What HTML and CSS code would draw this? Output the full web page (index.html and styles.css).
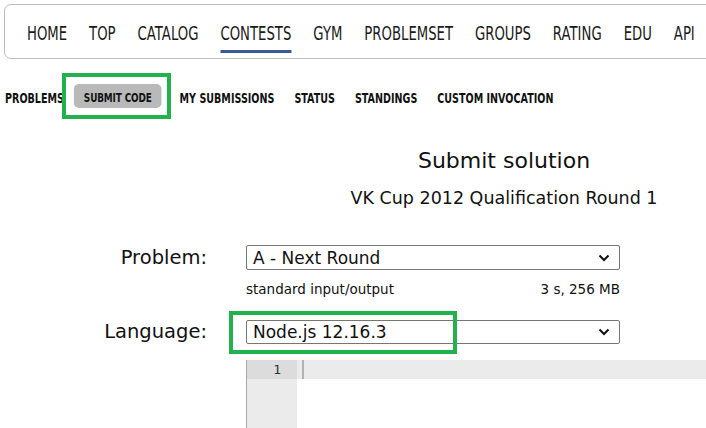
FILE: index.html
```html
<!DOCTYPE html>
<html>
<head>
<meta charset="utf-8">
<link rel="stylesheet" href="styles.css">
</head>
<body>
<div class="page">
  <nav class="main-menu">
    <div class="mm-row">
      <a class="mm-item">HOME</a>
      <a class="mm-item">TOP</a>
      <a class="mm-item">CATALOG</a>
      <a class="mm-item mm-current">CONTESTS</a>
      <a class="mm-item">GYM</a>
      <a class="mm-item">PROBLEMSET</a>
      <a class="mm-item">GROUPS</a>
      <a class="mm-item">RATING</a>
      <a class="mm-item">EDU</a>
      <a class="mm-item">API</a>
    </div>
  </nav>

  <nav class="second-menu">
    <div class="sm-row">
      <a class="sm-item sm-first">PROBLEMS</a>
      <a class="sm-item sm-current">SUBMIT CODE</a>
      <a class="sm-item">MY SUBMISSIONS</a>
      <a class="sm-item">STATUS</a>
      <a class="sm-item">STANDINGS</a>
      <a class="sm-item">CUSTOM INVOCATION</a>
    </div>
    <span class="hl hl-submit"></span>
  </nav>

  <section class="submit">
    <div class="heading">
      <div class="title">Submit solution</div>
      <div class="contest">VK Cup 2012 Qualification Round 1</div>
    </div>

    <div class="form">
      <div class="label">Problem:</div>
      <div class="field">
        <div class="select"><span>A - Next Round</span><svg class="chev" width="12" height="8" viewBox="0 0 12 8"><path d="M1.5 1.5 L6 6 L10.5 1.5" fill="none" stroke="#111" stroke-width="2"/></svg></div>
        <div class="limits"><span>standard input/output</span><span>3 s, 256 MB</span></div>
      </div>

      <div class="label label-lang">Language:</div>
      <div class="field field-lang">
        <div class="select"><span>Node.js 12.16.3</span><svg class="chev" width="12" height="8" viewBox="0 0 12 8"><path d="M1.5 1.5 L6 6 L10.5 1.5" fill="none" stroke="#111" stroke-width="2"/></svg></div>
        <span class="hl hl-lang"></span>
      </div>

      <div class="label"></div>
      <div class="editor">
        <div class="gutter">
          <div class="gutter-line">1</div>
        </div>
        <div class="code">
          <div class="code-line"><span class="cursor"></span></div>
        </div>
      </div>
    </div>
  </section>
</div>
</body>
</html>
```

FILE: styles.css
```css
html, body {
  margin: 0;
  padding: 0;
  background: #fff;
  overflow: hidden;
}
.page {
  width: 706px;
  height: 428px;
  overflow: hidden;
  position: relative;
}
.main-menu {
  margin: 4px 0 0 4px;
  width: 760px;
  height: 55px;
  border: 1px solid #bcbcbc;
  border-radius: 7px;
  box-sizing: border-box;
  padding-left: 22px;
  display: flex;
  align-items: center;
}
.mm-row {
  display: flex;
  gap: 31.6px;
  transform: scaleX(0.696);
  transform-origin: left center;
  white-space: nowrap;
}
.mm-item {
  font-family: "DejaVu Sans", "Liberation Sans", sans-serif;
  font-size: 19px;
  color: #1a1a1a;
  position: relative;
  line-height: 24px;
  padding-top: 2px;
}
.mm-current::after {
  content: "";
  position: absolute;
  left: 0;
  right: 0;
  bottom: -8px;
  height: 3px;
  background: #3b5998;
}
.second-menu {
  position: relative;
  margin-top: 25px;
  height: 24px;
}
.sm-row {
  display: flex;
  align-items: stretch;
  height: 24px;
  transform: scaleX(0.684);
  transform-origin: left center;
  white-space: nowrap;
}
.sm-item {
  font-family: "DejaVu Sans", "Liberation Sans", sans-serif;
  font-weight: bold;
  font-size: 14px;
  color: #111;
  padding: 4px 14.6px 0;
  line-height: 20px;
}
.sm-first {
  padding-left: 7.3px;
}
.sm-current {
  background: #b9b9b9;
  border-radius: 7.3px / 5px;
  margin-right: 11.7px;
  font-size: 13px;
  letter-spacing: -0.2px;
}
.hl {
  position: absolute;
  border: 4px solid #22b14c;
  box-sizing: border-box;
}
.hl-submit {
  left: 62px;
  top: -11px;
  width: 109px;
  height: 46px;
}
.submit {
  font-family: "DejaVu Sans", Verdana, sans-serif;
  color: #111;
}
.heading {
  margin-left: 302px;
  width: 404px;
  text-align: center;
  margin-top: 39px;
}
.title {
  font-size: 22px;
  line-height: 28px;
}
.contest {
  font-size: 17.5px;
  line-height: 22px;
  margin-top: 12px;
}
.form {
  display: grid;
  grid-template-columns: 207px 1fr;
  column-gap: 39px;
  margin-top: 36px;
}
.label {
  text-align: right;
  font-size: 19.5px;
  line-height: 25px;
}
.field {
  position: relative;
}
.select {
  width: 374px;
  height: 25px;
  box-sizing: border-box;
  border: 1px solid #767676;
  border-radius: 2px;
  display: flex;
  align-items: center;
  justify-content: space-between;
  padding: 0 9px 0 6px;
  font-size: 17px;
}
.limits {
  width: 374px;
  display: flex;
  justify-content: space-between;
  font-size: 13.5px;
  line-height: 16px;
  margin-top: 11px;
  margin-bottom: 23px;
}
.label-lang {
  line-height: 24px;
}
.field-lang .select {
  height: 24px;
}
.hl-lang {
  left: -17px;
  top: -9px;
  width: 228px;
  height: 43px;
}
.editor {
  margin-top: 16px;
  display: flex;
  height: 80px;
  border-left: 1px solid #a9a9a9;
  width: 500px;
}
.gutter {
  width: 50px;
  background: #ebebeb;
}
.gutter-line {
  height: 19px;
  background: #dcdcdc;
  font-family: "DejaVu Sans Mono", monospace;
  font-size: 13px;
  line-height: 19px;
  text-align: right;
  padding-right: 16px;
  color: #333;
}
.code {
  flex: 1;
}
.code-line {
  height: 19px;
  background: #ebebeb;
  position: relative;
}
.cursor {
  position: absolute;
  left: 5px;
  top: 0;
  width: 2px;
  height: 19px;
  background: #b3b3b3;
}
```
